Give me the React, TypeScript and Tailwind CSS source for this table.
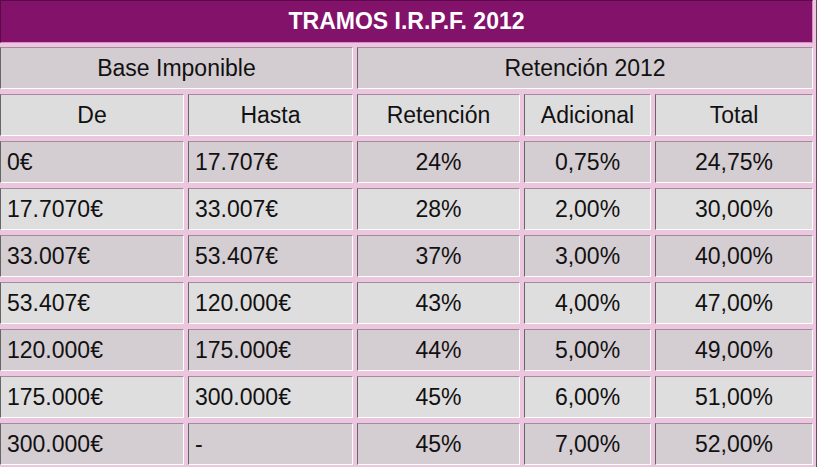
const rows: [string, string, string, string, string][] = [
  ["0€", "17.707€", "24%", "0,75%", "24,75%"],
  ["17.7070€", "33.007€", "28%", "2,00%", "30,00%"],
  ["33.007€", "53.407€", "37%", "3,00%", "40,00%"],
  ["53.407€", "120.000€", "43%", "4,00%", "47,00%"],
  ["120.000€", "175.000€", "44%", "5,00%", "49,00%"],
  ["175.000€", "300.000€", "45%", "6,00%", "51,00%"],
  ["300.000€", "-", "45%", "7,00%", "52,00%"],
];

const cell =
  "flex items-center border-l border-t border-r border-b border-l-[#666] border-t-[#a38a9c] border-r-white border-b-white text-[23px] leading-none text-[#111]";

export default function App() {
  return (
    <div
      className="w-[817px] h-[467px] overflow-hidden bg-[#ebc6de] border-r border-r-[#6a4a62]"
      style={{ fontFamily: '"Liberation Sans", Arial, sans-serif' }}
    >
      <div className="grid grid-cols-[184px_165px_163px_127px_158px] auto-rows-[42px] gap-x-[4px] gap-y-[5px]">
        {/* Title */}
        <div className="col-span-5 h-[43px] flex items-center justify-center bg-[#82126a] border-l border-t border-r border-b border-l-[#5a0a48] border-t-[#5a0a48] border-r-[#d98cc4] border-b-[#d98cc4] text-white font-bold text-[23px] leading-none">
          TRAMOS I.R.P.F. 2012
        </div>

        {/* Group headers */}
        <div className={`${cell} col-span-2 justify-center bg-[#d3cdd1]`}>Base Imponible</div>
        <div className={`${cell} col-span-3 justify-center bg-[#d3cdd1]`}>Retención 2012</div>

        {/* Column headers */}
        {["De", "Hasta", "Retención", "Adicional", "Total"].map((h) => (
          <div key={h} className={`${cell} justify-center bg-[#dedddd]`}>
            {h}
          </div>
        ))}

        {/* Data rows */}
        {rows.map((r, i) => {
          const bg = i % 2 === 0 ? "bg-[#d4cdd2]" : "bg-[#dfdede]";
          return r.map((v, j) => (
            <div
              key={`${i}-${j}`}
              className={`${cell} ${bg} ${j < 2 ? "justify-start pl-[6px]" : "justify-center"}`}
            >
              {v}
            </div>
          ));
        })}
      </div>
    </div>
  );
}
